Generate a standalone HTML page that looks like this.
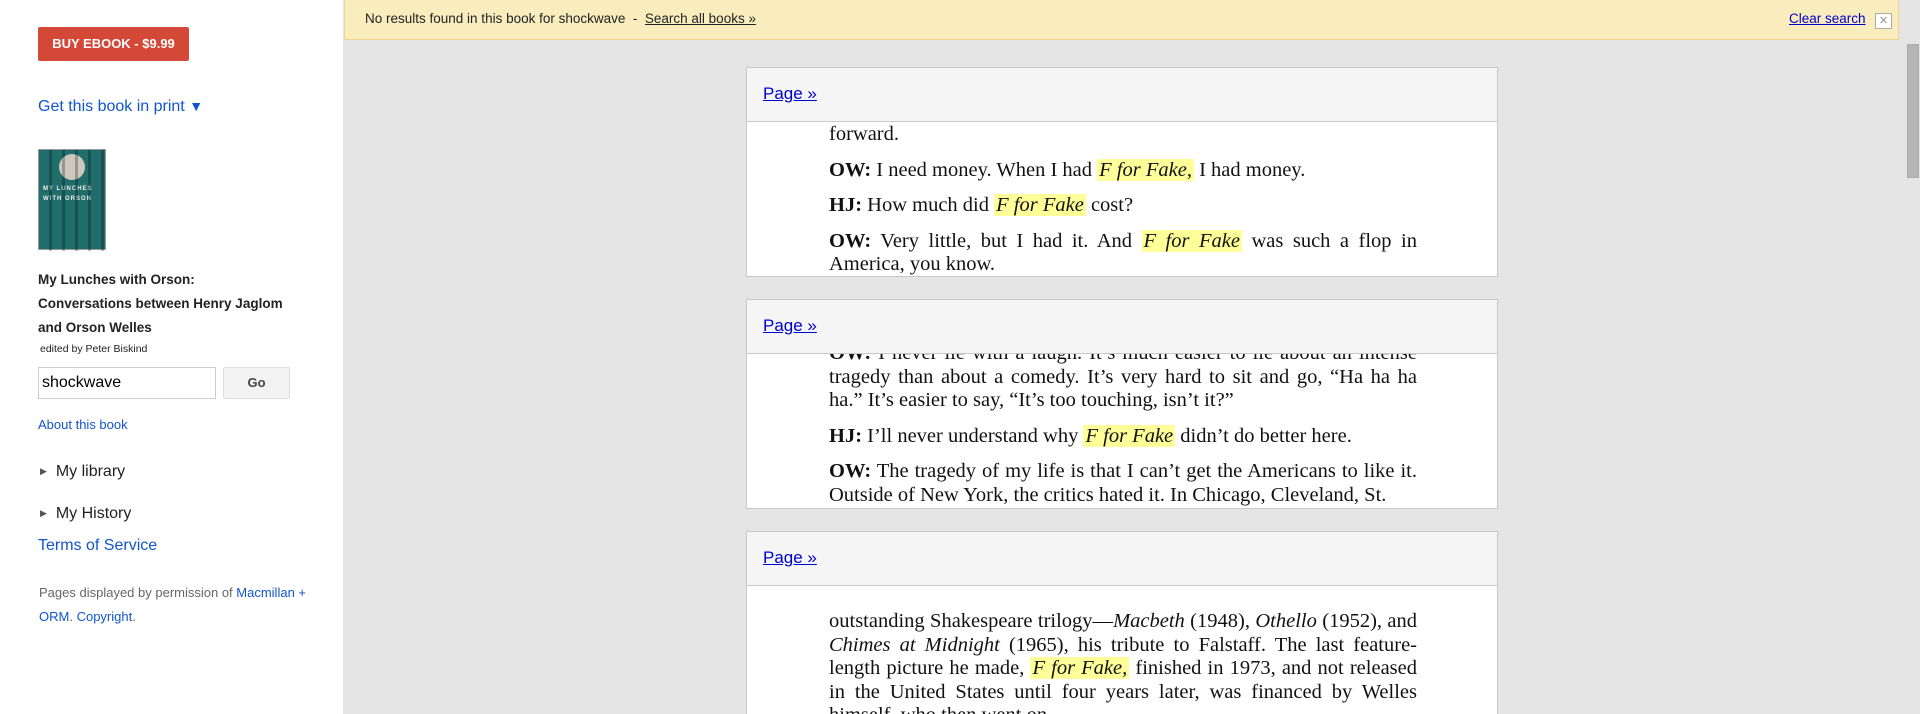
<!DOCTYPE html>
<html style="width:1920px;height:714px;overflow:hidden"><head><meta charset="utf-8"><style>
*{margin:0;padding:0;box-sizing:border-box}
body{width:1920px;height:714px;overflow:hidden;background:#e5e5e5;font-family:"Liberation Sans",Arial,sans-serif;position:relative}
.side{position:absolute;left:0;top:0;width:343px;height:714px;background:#fff}
.a{position:absolute;white-space:nowrap}
.btn{left:38px;top:27px;width:151px;height:34px;background:#d44837;border-radius:2px;color:#fff;font-weight:bold;font-size:13px;line-height:34px;text-align:center}
.blue{color:#1155cc}
.banner{position:absolute;left:344px;top:0;width:1555px;height:40px;background:#f9edbe;border:1px solid #f0d58c;border-top:none;font-size:13.5px;color:#222}
.banner a{color:#222;text-decoration:underline}
.box{position:absolute;left:746px;width:752px;background:#fff;border:1px solid #c8c8c8;overflow:hidden}
.hdr{height:54px;background:#f5f5f5;border-bottom:1px solid #c8c8c8;position:relative}
.hdr a{position:absolute;left:16px;top:16px;font-size:17px;color:#00c;text-decoration:underline}
.txt{position:absolute;left:82px;width:588px;font-family:"Liberation Serif","Times New Roman",serif;font-size:20.5px;line-height:23.5px;color:#111;text-align:justify}
.txt p{margin-bottom:12px}
.h{background:#ffff99;font-style:italic;padding:0 2px}
</style></head><body>
<div class="side">
<div class="a btn">BUY EBOOK - $9.99</div>
<div class="a blue" style="left:38px;top:98px;font-size:16px">Get this book in print <span style="font-size:14px">▼</span></div>
<div class="a" style="left:38px;top:149px;width:68px;height:101px;background:#1f6e6c;border:1px solid #999">
<div style="position:absolute;left:20px;top:4px;width:26px;height:26px;border-radius:50%;background:#ccc8be"></div>
<div style="position:absolute;left:4px;top:34px;color:#eee;font-size:6px;font-weight:bold;letter-spacing:1px;line-height:10px">MY LUNCHES<br>WITH ORSON</div>
<div style="position:absolute;left:0;top:0;width:68px;height:101px;background:repeating-linear-gradient(90deg,transparent 0 10px,rgba(0,0,0,.25) 10px 13px)"></div>
</div>
<div class="a" style="left:38px;top:268px;font-size:13.5px;font-weight:bold;color:#222;line-height:24px">My Lunches with Orson:<br>Conversations between Henry Jaglom<br>and Orson Welles</div>
<div class="a" style="left:40px;top:343px;font-size:10.5px;color:#222">edited by Peter Biskind</div>
<div class="a" style="left:38px;top:367px;width:178px;height:32px;border:1px solid #ccc;font-size:16px;padding:6px 3px;color:#000">shockwave</div>
<div class="a" style="left:223px;top:367px;width:67px;height:32px;border:1px solid #ddd;background:#f3f3f3;border-radius:2px;font-size:13px;font-weight:bold;color:#444;text-align:center;line-height:30px">Go</div>
<div class="a blue" style="left:38px;top:417px;font-size:13px">About this book</div>
<div class="a" style="left:40px;top:463px;font-size:16px;color:#222"><span style="font-size:9px;color:#555;vertical-align:2px">▶</span>&nbsp;&nbsp;My library</div>
<div class="a" style="left:40px;top:505px;font-size:16px;color:#222"><span style="font-size:9px;color:#555;vertical-align:2px">▶</span>&nbsp;&nbsp;My History</div>
<div class="a blue" style="left:38px;top:537px;font-size:16px">Terms of Service</div>
<div class="a" style="left:39px;top:581px;font-size:13px;color:#666;line-height:24px">Pages displayed by permission of <span class="blue">Macmillan +</span><br><span class="blue">ORM</span>. <span class="blue">Copyright</span>.</div>
</div>
<div class="banner">
<div class="a" style="left:20px;top:11px">No results found in this book for shockwave &nbsp;-&nbsp; <a>Search all books »</a></div>
<div class="a" style="left:1444px;top:11px"><a style="color:#00c">Clear search</a></div>
<div class="a" style="left:1530px;top:13px;width:17px;height:16px;border:1px solid #aaa;background:#fff;color:#999;font-size:15px;line-height:13px;text-align:center">×</div>
</div>
<div class="a" style="left:1907px;top:44px;width:12px;height:134px;background:#b5b5b5;border:1px solid #aaa"></div>

<div class="box" style="top:67px;height:210px">
<div class="hdr"><a>Page »</a></div>
<div class="txt" style="top:55px">
<p>forward.</p>
<p><b>OW:</b> I need money. When I had <span class="h">F for Fake,</span> I had money.</p>
<p><b>HJ:</b> How much did <span class="h">F for Fake</span> cost?</p>
<p><b>OW:</b> Very little, but I had it. And <span class="h">F for Fake</span> was such a flop in America, you know.</p>
</div></div>

<div class="box" style="top:299px;height:210px">
<div class="hdr" style="z-index:2;position:relative"><a>Page »</a></div>
<div class="txt" style="top:42px">
<p><b>OW:</b> I never lie with a laugh. It’s much easier to lie about an intense tragedy than about a comedy. It’s very hard to sit and go, “Ha ha ha ha.” It’s easier to say, “It’s too touching, isn’t it?”</p>
<p><b>HJ:</b> I’ll never understand why <span class="h">F for Fake</span> didn’t do better here.</p>
<p><b>OW:</b> The tragedy of my life is that I can’t get the Americans to like it. Outside of New York, the critics hated it. In Chicago, Cleveland, St.</p>
</div></div>

<div class="box" style="top:531px;height:183px;border-bottom:none">
<div class="hdr"><a>Page »</a></div>
<div class="txt" style="top:78px;height:104px;overflow:hidden">
<p>outstanding Shakespeare trilogy—<i>Macbeth</i> (1948), <i>Othello</i> (1952), and <i>Chimes at Midnight</i> (1965), his tribute to Falstaff. The last feature-length picture he made, <span class="h">F for Fake,</span> finished in 1973, and not released in the United States until four years later, was financed by Welles himself, who then went on.</p>
</div></div>
</body></html>
